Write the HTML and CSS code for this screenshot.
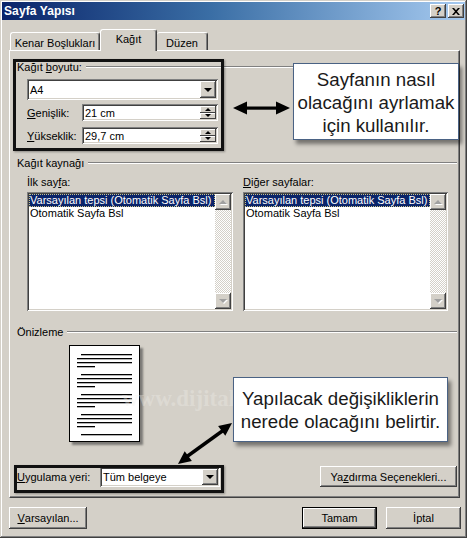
FILE: index.html
```html
<!DOCTYPE html>
<html lang="tr">
<head>
<meta charset="utf-8">
<title>Sayfa Yapısı</title>
<link rel="stylesheet" href="styles.css">
</head>
<body>
<div class="window">
  <div class="titlebar">
    <span class="title">Sayfa Yapısı</span>
    <div class="tbtns">
      <span class="tbtn help">?</span>
      <span class="tbtn"><svg width="8" height="7" viewBox="0 0 8 7"><path d="M0 0h2l2 2.2L6 0h2L5 3.5 8 7H6L4 4.8 2 7H0l3-3.5z" fill="#000"/></svg></span>
    </div>
  </div>

  <div class="tabs">
    <div class="tab t1">Kenar Boşlukları</div>
    <div class="tab active">Kağıt</div>
    <div class="tab t3">Düzen</div>
  </div>

  <div class="panel">
    <div class="ghead"><span>Kağıt <u>b</u>oyutu:</span><i class="rule"></i></div>
    <div class="size">
      <div class="combo wide"><span class="val">A4</span><span class="ddbtn"><i class="tri-down"></i></span></div>
      <div class="frow"><span class="flabel"><u>G</u>enişlik:</span>
        <div class="spin"><span class="val">21 cm</span><span class="spinbtns"><span class="sb"><i class="tri-up sm"></i></span><span class="sb"><i class="tri-down sm"></i></span></span></div>
      </div>
      <div class="frow r2"><span class="flabel"><u>Y</u>ükseklik:</span>
        <div class="spin"><span class="val">29,7 cm</span><span class="spinbtns"><span class="sb"><i class="tri-up sm"></i></span><span class="sb"><i class="tri-down sm"></i></span></span></div>
      </div>
    </div>

    <div class="ghead h2"><span>Kağıt kaynağı</span><i class="rule"></i></div>
    <div class="lists">
      <div class="lcol">
        <div class="llabel">İlk say<u>f</u>a:</div>
        <div class="listbox">
          <div class="items">
            <div class="item sel">Varsayılan tepsi (Otomatik Sayfa Bsl)</div>
            <div class="item">Otomatik Sayfa Bsl</div>
          </div>
          <div class="vscroll"><span class="sbtn"><i class="tri-up dis"></i></span><span class="track"></span><span class="sbtn"><i class="tri-down dis"></i></span></div>
        </div>
      </div>
      <div class="lcol">
        <div class="llabel"><u>D</u>iğer sayfalar:</div>
        <div class="listbox">
          <div class="items">
            <div class="item sel">Varsayılan tepsi (Otomatik Sayfa Bsl)</div>
            <div class="item">Otomatik Sayfa Bsl</div>
          </div>
          <div class="vscroll"><span class="sbtn"><i class="tri-up dis"></i></span><span class="track"></span><span class="sbtn"><i class="tri-down dis"></i></span></div>
        </div>
      </div>
    </div>

    <div class="ghead h3"><span>Önizleme</span><i class="rule"></i></div>
    <div class="preview">
      <svg width="69" height="95" viewBox="0 0 69 95">
        <g fill="#000">
          <rect x="11" y="8" width="51" height="1.3"/><rect x="7" y="12" width="55" height="1.3"/><rect x="7" y="16" width="55" height="1.3"/><rect x="7" y="20" width="18" height="1.3"/>
          <rect x="11" y="28" width="51" height="1.3"/><rect x="7" y="32" width="55" height="1.3"/><rect x="7" y="36" width="55" height="1.3"/><rect x="7" y="40" width="18" height="1.3"/>
          <rect x="11" y="48" width="51" height="1.3"/><rect x="7" y="52" width="55" height="1.3"/><rect x="7" y="56" width="55" height="1.3"/><rect x="7" y="60" width="18" height="1.3"/>
          <rect x="11" y="68" width="51" height="1.3"/><rect x="7" y="72" width="55" height="1.3"/><rect x="7" y="76" width="55" height="1.3"/><rect x="7" y="80" width="18" height="1.3"/>
          <rect x="11" y="88" width="51" height="1.3"/>
        </g>
      </svg>
    </div>

    <div class="applyrow">
      <span class="alabel"><u>U</u>ygulama yeri:</span>
      <div class="combo apply"><span class="val">Tüm belgeye</span><span class="ddbtn"><i class="tri-down"></i></span></div>
      <span class="btn print">Ya<u>z</u>dırma Seçenekleri...</span>
    </div>
  </div>

  <div class="bottom">
    <span class="btn def"><u>V</u>arsayılan...</span>
    <span class="spacer"></span>
    <span class="btn ok">Tamam</span>
    <span class="btn">İptal</span>
  </div>

  <div class="watermark">www.dijital</div>
  <div class="mark m1"></div>
  <div class="mark m2"></div>
  <div class="callout c1">Sayfanın nasıl<br>olacağını ayrlamak<br>için kullanılır.</div>
  <div class="callout c2">Yapılacak değişikliklerin<br>nerede olacağını belirtir.</div>
  <svg class="arrows" width="467" height="538" viewBox="0 0 467 538">
    <g fill="#000" stroke="none">
      <rect x="244" y="106.5" width="35" height="3.2"/>
      <polygon points="233,108 247,101.5 247,114.5"/>
      <polygon points="290,108 276,101.5 276,114.5"/>
      <polygon points="178,464 191.9,460.9 184.7,451.3"/>
      <polygon points="232,423 225.3,435.7 218.1,426.1"/>
    </g>
    <line x1="187" y1="456.5" x2="223" y2="430.5" stroke="#000" stroke-width="3.4"/>
  </svg>
</div>
</body>
</html>
```

FILE: styles.css
```css
* { box-sizing: border-box; }
html, body { margin: 0; padding: 0; }
body {
  width: 467px;
  height: 538px;
  overflow: hidden;
  background: #d4d0c8;
  font: 11px "Liberation Sans", Arial, sans-serif;
  color: #000;
}
u { text-decoration: underline; text-underline-offset: 1px; }

.window {
  position: relative;
  width: 467px;
  height: 538px;
  padding: 2px;
  background: #d4d0c8;
  box-shadow: inset -1px -1px #404040, inset 1px 1px #d4d0c8, inset -2px -2px #808080, inset 2px 2px #fff;
}

.titlebar {
  height: 18px;
  background: linear-gradient(to right, #0a246a 0%, #3a6ea5 45%, #a6caf0 100%);
  display: flex;
  align-items: center;
  justify-content: space-between;
  padding: 0 1px 0 2px;
}
.title { color: #fff; font-weight: bold; font-size: 12px; letter-spacing: 0.1px; }
.tbtns { display: flex; gap: 2px; }
.tbtn {
  width: 16px; height: 14px;
  background: #d4d0c8;
  display: flex; align-items: center; justify-content: center;
  box-shadow: inset -1px -1px #404040, inset 1px 1px #fff, inset -2px -2px #808080;
  font-weight: bold; font-size: 11px; line-height: 1;
}

.tabs {
  display: flex;
  align-items: flex-end;
  height: 21px;
  margin: 9px 0 0 8px;
}
.tab {
  height: 18px;
  display: flex; align-items: center; justify-content: center;
  padding-top: 2px;
  border-radius: 3px 3px 0 0;
  border-top: 1px solid #fff;
  border-left: 1px solid #fff;
  border-right: 1px solid #404040;
  box-shadow: inset -1px 0 #808080;
  background: #d4d0c8;
}
.t1 { width: 90px; }
.t3 { width: 51px; border-left: none; }
.tab.active {
  width: 57px;
  height: 22px;
  margin-bottom: -1px;
  padding-top: 0;
  padding-bottom: 3px;
  position: relative;
  z-index: 1;
}

.panel {
  margin-left: 7px;
  width: 451px;
  height: 448px;
  border-top: 1px solid #fff;
  border-left: 1px solid #fff;
  border-right: 1px solid #404040;
  border-bottom: 1px solid #404040;
  box-shadow: inset -1px -1px #808080;
  padding: 9px 2px 0 7px;
}

.ghead { display: flex; align-items: center; gap: 4px; height: 13px; }
.ghead span { white-space: nowrap; }
.rule { flex: 1; height: 2px; border-top: 1px solid #808080; border-bottom: 1px solid #fff; }
.h2 { margin-top: 12px; }
.h3 { margin-top: 14px; }

.size { margin: 6px 0 0 10px; width: 191px; }
.combo, .spin {
  position: relative;
  background: #fff;
  display: flex; align-items: center;
  padding: 2px 2px 2px 3px;
  box-shadow: inset 1px 1px #808080, inset -1px -1px #fff, inset 2px 2px #404040, inset -2px -2px #d4d0c8;
}
.combo .val, .spin .val { flex: 1; white-space: nowrap; }
.combo.wide { height: 21px; }
.ddbtn {
  width: 16px; align-self: stretch;
  background: #d4d0c8;
  display: flex; align-items: center; justify-content: center;
  box-shadow: inset -1px -1px #404040, inset 1px 1px #fff, inset -2px -2px #808080;
}
.tri-down, .tri-up { display: block; width: 0; height: 0; border-left: 4px solid transparent; border-right: 4px solid transparent; }
.tri-down { border-top: 4px solid #000; }
.tri-up { border-bottom: 4px solid #000; }
.tri-down.sm { border-left-width: 3px; border-right-width: 3px; border-top-width: 3px; }
.tri-up.sm { border-left-width: 3px; border-right-width: 3px; border-bottom-width: 3px; }
.tri-down.dis { border-top-color: #a0a0a0; filter: drop-shadow(1px 1px 0 #fff); }
.tri-up.dis { border-bottom-color: #a0a0a0; filter: drop-shadow(1px 1px 0 #fff); }

.frow { display: flex; align-items: center; margin-top: 4px; height: 17px; }
.frow.r2 { margin-top: 6px; }
.flabel { width: 55px; white-space: nowrap; }
.spin { width: 136px; height: 17px; padding-top: 2px; padding-bottom: 2px; }
.spinbtns { width: 16px; align-self: stretch; display: flex; flex-direction: column; }
.sb {
  flex: 1;
  background: #d4d0c8;
  display: flex; align-items: center; justify-content: center;
  box-shadow: inset -1px -1px #404040, inset 1px 1px #fff;
}

.lists { display: grid; grid-template-columns: 206px 205px; column-gap: 10px; margin: 7px 0 0 10px; }
.llabel { height: 13px; line-height: 13px; margin-bottom: 3px; white-space: nowrap; }
.listbox {
  height: 119px;
  background: #fff;
  display: flex;
  padding: 2px;
  box-shadow: inset 1px 1px #808080, inset -1px -1px #fff, inset 2px 2px #404040, inset -2px -2px #d4d0c8;
}
.items { flex: 1; min-width: 0; }
.item { height: 13px; line-height: 13px; padding-left: 1px; white-space: nowrap; overflow: hidden; }
.item.sel { background: #0a246a; color: #fff; outline: 1px dotted #c9c28a; outline-offset: -1px; }
.vscroll { width: 16px; display: flex; flex-direction: column; }
.sbtn {
  height: 16px;
  background: #d4d0c8;
  display: flex; align-items: center; justify-content: center;
  box-shadow: inset -1px -1px #404040, inset 1px 1px #fff, inset -2px -2px #808080;
}
.track {
  flex: 1;
  background-color: #fff;
  background-image: repeating-conic-gradient(#d4d0c8 0 25%, #fff 0 50%);
  background-size: 2px 2px;
}

.preview {
  width: 71px; height: 97px;
  margin: 7px 0 0 52px;
  background: #fff;
  border: 1px solid #000;
  box-shadow: 3px 3px 2px #7c7a76;
}
.preview svg { display: block; }

.applyrow { display: flex; align-items: center; margin-top: 24px; height: 21px; }
.alabel { width: 83px; white-space: nowrap; }
.combo.apply { width: 120px; height: 20px; }

.btn {
  display: flex; align-items: center; justify-content: center;
  height: 22px;
  background: #d4d0c8;
  white-space: nowrap;
  box-shadow: inset -1px -1px #404040, inset 1px 1px #fff, inset -2px -2px #808080;
}
.btn.print { margin-left: auto; width: 137px; height: 21px; }
.bottom { display: flex; gap: 9px; margin-top: 9px; padding: 0 4px 0 7px; }
.spacer { flex: 1; }
.btn.def { width: 78px; }
.bottom .btn:not(.def) { width: 75px; }
.btn.ok { box-shadow: inset 0 0 0 1px #000, inset -2px -2px #404040, inset 2px 2px #fff, inset -3px -3px #808080; }

.watermark {
  position: absolute;
  left: 122px; top: 386px;
  font: bold 23px "Liberation Serif", serif;
  color: rgba(240, 238, 234, 0.35);
  white-space: nowrap;
}
.mark {
  position: absolute;
  border: 3px solid #111;
  box-shadow: 1px 1px 2px rgba(0,0,0,0.35);
}
.m1 { left: 13px; top: 59px; width: 211px; height: 92px; }
.m2 { left: 14px; top: 465px; width: 210px; height: 28px; }

.callout {
  position: absolute;
  background: #fff;
  border: 1px solid #4a6284;
  box-shadow: 3px 4px 4px rgba(0,0,0,0.45);
  font: 18.7px "Liberation Sans", Arial, sans-serif;
  color: #1a1a1a;
  text-align: center;
  white-space: nowrap;
}
.c1 { left: 293px; top: 63px; width: 166px; height: 77px; padding-top: 4px; line-height: 23px; }
.c2 { left: 233px; top: 377px; width: 215px; height: 65px; padding-top: 9px; line-height: 23px; }
.arrows { position: absolute; left: 0; top: 0; pointer-events: none; }
```
